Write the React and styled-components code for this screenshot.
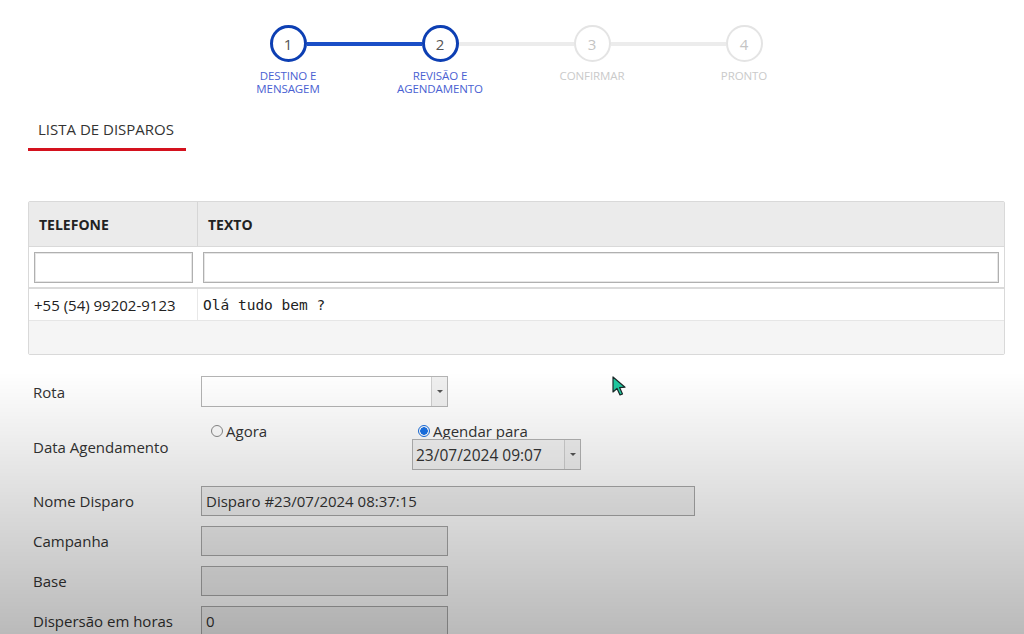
import React from "react";
import styled, { createGlobalStyle } from "styled-components";

const blue = "#0d3fb3";
const blueLine = "#1a4fc7";
const greyLine = "#ececec";

const steps = [
  { n: 1, label: ["DESTINO E", "MENSAGEM"], state: "done" },
  { n: 2, label: ["REVISÃO E", "AGENDAMENTO"], state: "current" },
  { n: 3, label: ["CONFIRMAR"], state: "todo" },
  { n: 4, label: ["PRONTO"], state: "todo" },
];

function App() {
  return (
    <>
      <GlobalStyle />
      <Page>
        <Stepper>
          {steps.map((s, i) => (
            <Step key={s.n}>
              <StepTrack>
                <Half
                  $hidden={i === 0}
                  $color={i > 0 && steps[i - 1].state !== "todo" && s.state !== "todo" ? blueLine : greyLine}
                />
                <Circle $active={s.state !== "todo"}>{s.n}</Circle>
                <Half
                  $hidden={i === steps.length - 1}
                  $color={s.state === "done" ? blueLine : greyLine}
                />
              </StepTrack>
              <StepLabel $active={s.state !== "todo"}>
                {s.label.map((l) => (
                  <div key={l}>{l}</div>
                ))}
              </StepLabel>
            </Step>
          ))}
        </Stepper>

        <Tab>LISTA DE DISPAROS</Tab>

        <Grid>
          <HeadRow>
            <HeadCell $w={169}>TELEFONE</HeadCell>
            <HeadCell>TEXTO</HeadCell>
          </HeadRow>
          <FilterRow>
            <FilterCell $w={169}>
              <FilterInput />
            </FilterCell>
            <FilterCell>
              <FilterInput />
            </FilterCell>
          </FilterRow>
          <DataRow>
            <DataCell $w={169}>+55 (54) 99202-9123</DataCell>
            <DataCell $mono>Olá tudo bem ?</DataCell>
          </DataRow>
          <GridFooter />
        </Grid>

        <Form>
          <FormRow>
            <Label>Rota</Label>
            <Combo $w={247} $white>
              <ComboText />
              <ComboArrow>
                <Caret />
              </ComboArrow>
            </Combo>
          </FormRow>

          <FormRow $tall>
            <Label>Data Agendamento</Label>
            <RadioArea>
              <RadioOption $w={211}>
                <RadioLine>
                  <Radio />
                  Agora
                </RadioLine>
              </RadioOption>
              <RadioOption>
                <RadioLine $shift>
                  <Radio $checked />
                  Agendar para
                </RadioLine>
                <Combo $w={169}>
                  <ComboText>23/07/2024 09:07</ComboText>
                  <ComboArrow>
                    <Caret />
                  </ComboArrow>
                </Combo>
              </RadioOption>
            </RadioArea>
          </FormRow>

          <FormRow>
            <Label>Nome Disparo</Label>
            <TextBox $w={494}>Disparo #23/07/2024 08:37:15</TextBox>
          </FormRow>
          <FormRow>
            <Label>Campanha</Label>
            <TextBox $w={247} />
          </FormRow>
          <FormRow>
            <Label>Base</Label>
            <TextBox $w={247} />
          </FormRow>
          <FormRow>
            <Label>Dispersão em horas</Label>
            <TextBox $w={247}>0</TextBox>
          </FormRow>
        </Form>

        <Cursor width="16" height="22" viewBox="0 0 16 22">
          <path
            d="M1 1 L1 16 L5 12.5 L8 19 L10.5 18 L7.6 11.6 L13 11.2 Z"
            fill="#1fc9a0"
            stroke="#1b2a2a"
            strokeWidth="1.2"
            strokeLinejoin="round"
          />
        </Cursor>
      </Page>
      <Vignette />
    </>
  );
}

const GlobalStyle = createGlobalStyle`
  html, body {
    margin: 0;
    padding: 0;
    background: #fff;
  }
  body {
    font-family: "Open Sans", "Noto Sans", sans-serif;
    color: #333;
  }
  * {
    box-sizing: border-box;
  }
`;

const Page = styled.div`
  position: relative;
  width: 1024px;
  height: 634px;
  overflow: hidden;
  padding: 25px 19px 0 28px;
`;

const Vignette = styled.div`
  position: fixed;
  inset: 0;
  pointer-events: none;
  background: linear-gradient(
    to bottom,
    rgba(0, 0, 0, 0) 0px,
    rgba(0, 0, 0, 0) 372px,
    rgba(0, 0, 0, 0.27) 634px
  );
`;

const Stepper = styled.div`
  display: flex;
  margin-left: 184px;
`;

const Step = styled.div`
  width: 152px;
  display: flex;
  flex-direction: column;
  align-items: center;
`;

const StepTrack = styled.div`
  width: 100%;
  display: flex;
  align-items: center;
`;

const Half = styled.div`
  flex: 1;
  height: 4px;
  background: ${(p) => (p.$hidden ? "transparent" : p.$color)};
`;

const Circle = styled.div`
  width: 37px;
  height: 37px;
  border-radius: 50%;
  border: ${(p) => (p.$active ? `3px solid ${blue}` : "2px solid #e4e4e4")};
  background: #fff;
  display: flex;
  align-items: center;
  justify-content: center;
  font-size: 15px;
  color: ${(p) => (p.$active ? "#555" : "#c4c4c4")};
`;

const StepLabel = styled.div`
  margin-top: 7px;
  font-size: 11.5px;
  line-height: 13px;
  text-align: center;
  letter-spacing: -0.1px;
  color: ${(p) => (p.$active ? "#4a5fd2" : "#cacaca")};
`;

const Tab = styled.div`
  margin-top: 24px;
  width: 158px;
  padding: 0 0 9px 10px;
  font-size: 15px;
  line-height: 20px;
  color: #333;
  border-bottom: 3px solid #d4121e;
`;

const Grid = styled.div`
  margin-top: 50px;
  border: 1px solid #d9d9d9;
  border-radius: 2px;
  display: flex;
  flex-direction: column;
`;

const HeadRow = styled.div`
  display: flex;
  height: 45px;
  background: #ebebeb;
  border-bottom: 1px solid #d9d9d9;
`;

const HeadCell = styled.div`
  ${(p) => (p.$w ? `width: ${p.$w}px; border-right: 1px solid #d6d6d6;` : "flex: 1;")}
  display: flex;
  align-items: center;
  padding-left: 10px;
  font-size: 14px;
  font-weight: 700;
  color: #222;
`;

const FilterRow = styled.div`
  display: flex;
  height: 42px;
  border-bottom: 2px solid #dadada;
  background: #fff;
`;

const FilterCell = styled.div`
  ${(p) => (p.$w ? `width: ${p.$w}px;` : "flex: 1;")}
  display: flex;
  align-items: center;
  padding: 0 5px;
`;

const FilterInput = styled.div`
  width: 100%;
  height: 31px;
  border: 1px solid #b0b0b0;
  box-shadow: inset 0 0 0 1px #e6e6e6;
  background: #fff;
`;

const DataRow = styled.div`
  display: flex;
  height: 32px;
  background: #fff;
  border-bottom: 1px solid #e6e6e6;
`;

const DataCell = styled.div`
  ${(p) => (p.$w ? `width: ${p.$w}px; border-right: 1px solid #e8e8e8;` : "flex: 1;")}
  display: flex;
  align-items: center;
  padding-left: 5px;
  font-size: ${(p) => (p.$mono ? "14.5px" : "15px")};
  font-family: ${(p) =>
    p.$mono ? '"DejaVu Sans Mono", "Liberation Mono", monospace' : '"Open Sans", sans-serif'};
  color: #222;
`;

const GridFooter = styled.div`
  height: 33px;
  background: #f5f5f5;
`;

const Form = styled.div`
  margin-top: 21px;
  padding-left: 5px;
  display: flex;
  flex-direction: column;
  gap: 10px;
`;

const FormRow = styled.div`
  display: flex;
  align-items: center;
  min-height: 30px;
  ${(p) => p.$tall && "margin-top: 6px; margin-bottom: 6px;"}
`;

const Label = styled.div`
  width: 168px;
  font-size: 15px;
  color: #333;
`;

const Combo = styled.div`
  width: ${(p) => p.$w}px;
  height: 31px;
  display: flex;
  border: 1px solid #b4b4b4;
  background: ${(p) => (p.$white ? "#fff" : "#f4f4f4")};
`;

const ComboText = styled.div`
  flex: 1;
  display: flex;
  align-items: center;
  padding-left: 3px;
  font-size: 15.5px;
  color: #333;
`;

const ComboArrow = styled.div`
  width: 16px;
  border-left: 1px solid #cfcfcf;
  background: #f0f0f0;
  display: flex;
  align-items: center;
  justify-content: center;
`;

const Caret = styled.span`
  width: 0;
  height: 0;
  border-left: 3px solid transparent;
  border-right: 3px solid transparent;
  border-top: 3px solid #555;
`;

const RadioArea = styled.div`
  display: flex;
  align-items: flex-start;
`;

const RadioOption = styled.div`
  ${(p) => p.$w && `width: ${p.$w}px;`}
  display: flex;
  flex-direction: column;
`;

const RadioLine = styled.label`
  display: flex;
  align-items: center;
  gap: 3px;
  height: 16px;
  padding-left: ${(p) => (p.$shift ? "6px" : "10px")};
  font-size: 15px;
  color: #333;
`;

const Radio = styled.span`
  width: 12px;
  height: 12px;
  border-radius: 50%;
  border: 1px solid ${(p) => (p.$checked ? "#1a6fe0" : "#8a8a8a")};
  background: ${(p) => (p.$checked ? "radial-gradient(circle, #1a73e8 0 3.5px, #fff 4px)" : "#fff")};
`;

const TextBox = styled.div`
  width: ${(p) => p.$w}px;
  height: 30px;
  border: 1px solid #a9a9a9;
  background: #f2f2f2;
  display: flex;
  align-items: center;
  padding-left: 4px;
  font-size: 15px;
  color: #333;
`;

const Cursor = styled.svg`
  position: absolute;
  left: 612px;
  top: 376px;
`;

export default App;
